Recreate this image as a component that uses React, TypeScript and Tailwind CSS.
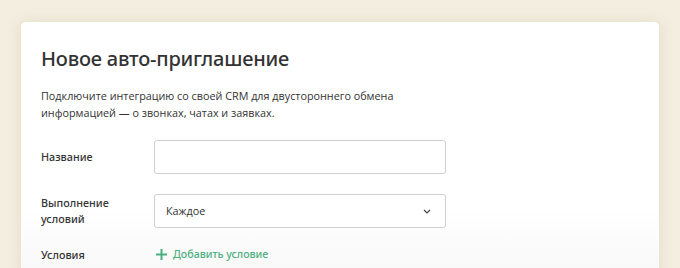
import React from "react";

export default function App() {
  return (
    <div className="w-[680px] h-[268px] overflow-hidden bg-[#f3eee0] pt-[22px] px-[21px]" style={{ fontFamily: '"Noto Sans", "Open Sans", sans-serif' }}>
      <div className="h-[300px] rounded-[5px] bg-gradient-to-b from-white from-[62%] to-[#f6f6f6] to-[90%] shadow-[0_0_14px_rgba(180,165,120,0.25)] px-5 pt-[23px] text-[#333]">
        <h1 className="text-[20px] leading-[28px] font-medium text-[#333] tracking-[-0.2px]">Новое авто-приглашение</h1>
        <p className="mt-[14px] text-[10.8px] leading-[17px] text-[#333] w-[370px]" style={{ fontFamily: '"Open Sans", sans-serif' }}>
          Подключите интеграцию со своей CRM для двустороннего обмена информацией — о звонках, чатах и заявках.
        </p>
        <div className="mt-[19px] flex items-center">
          <div className="w-[113px] text-[10.8px] font-medium leading-[16px]">Название</div>
          <div className="w-[292px] h-[34px] rounded-[3px] border border-[#cfcfcf] bg-white" />
        </div>
        <div className="mt-[20px] flex items-center">
          <div className="w-[113px] text-[10.8px] font-medium leading-[16px]">Выполнение<br />условий</div>
          <div className="w-[292px] h-[34px] rounded-[3px] border border-[#cfcfcf] bg-white flex items-center justify-between pl-[11px] pr-[14px]">
            <span className="text-[10.8px]" style={{ fontFamily: '"Open Sans", sans-serif' }}>Каждое</span>
            <svg width="8" height="5" viewBox="0 0 8 5" fill="none" stroke="#444" strokeWidth="1.2">
              <path d="M1 1l3 3 3-3" />
            </svg>
          </div>
        </div>
        <div className="mt-[19px] flex items-center">
          <div className="w-[113px] text-[10.8px] font-medium leading-[16px]">Условия</div>
          <button className="flex items-center gap-[6px] text-[10.6px] font-medium text-[#4caf7f] pl-[2px]">
            <svg width="11" height="11" viewBox="0 0 11 11" stroke="#4caf7f" strokeWidth="2">
              <path d="M5.5 0v11M0 5.5h11" />
            </svg>
            Добавить условие
          </button>
        </div>
      </div>
    </div>
  );
}
